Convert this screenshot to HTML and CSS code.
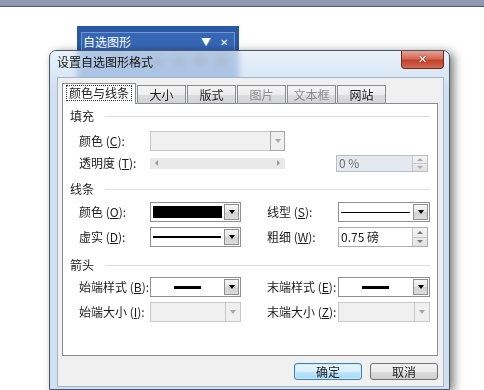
FILE: index.html
```html
<!DOCTYPE html>
<html lang="zh-CN">
<head>
    <meta charset="UTF-8">
    <meta name="viewport" content="width=device-width, initial-scale=1.0">
    <title>设置自选图形格式</title>
    <link rel="stylesheet" href="styles.css">
</head>
<body>
<div class="topbar"></div>

<div class="desktop">
    <!-- floating toolbar, partly behind the dialog -->
    <div class="toolbar">
        <div class="toolbar-inner">
            <div class="toolbar-title">
                <span class="toolbar-name">自选图形</span>
                <span class="toolbar-ctrl">▼</span>
                <span class="toolbar-ctrl">✕</span>
            </div>
            <div class="toolbar-icons">
                <i></i><i></i><i></i><i></i><i></i><i></i>
            </div>
        </div>
    </div>

    <div class="dialog">
        <div class="titlebar">
            <span class="title">设置自选图形格式</span>
            <button class="close-btn">✕</button>
        </div>

        <div class="client">
            <div class="tabs">
                <div class="tab active"><span class="focus">颜色与线条</span></div>
                <div class="tab">大小</div>
                <div class="tab">版式</div>
                <div class="tab is-disabled">图片</div>
                <div class="tab is-disabled">文本框</div>
                <div class="tab">网站</div>
            </div>

            <div class="panel">
                <div class="group-title first">填充</div>
                <div class="row row-fill">
                    <label class="lbl">颜色 (<u>C</u>):</label>
                    <div class="combo combo-wide is-disabled">
                        <span class="combo-value"></span>
                        <span class="combo-btn"><i class="arrow"></i></span>
                    </div>
                </div>
                <div class="row row-alpha">
                    <label class="lbl">透明度 (<u>T</u>):</label>
                    <div class="slider"><i class="tri-left"></i><i class="tri-right"></i></div>
                    <div class="spin spin-alpha is-disabled">
                        <span class="spin-value">0 %</span>
                        <span class="spin-btns"><i class="up"></i><i class="down"></i></span>
                    </div>
                </div>

                <div class="group-title">线条</div>
                <div class="row row-first">
                    <label class="lbl">颜色 (<u>O</u>):</label>
                    <div class="combo">
                        <span class="combo-value"><span class="swatch"></span></span>
                        <span class="combo-btn"><i class="arrow"></i></span>
                    </div>
                    <label class="lbl lbl-2">线型 (<u>S</u>):</label>
                    <div class="combo combo-right">
                        <span class="combo-value"><span class="line thin"></span></span>
                        <span class="combo-btn"><i class="arrow"></i></span>
                    </div>
                </div>
                <div class="row">
                    <label class="lbl">虚实 (<u>D</u>):</label>
                    <div class="combo">
                        <span class="combo-value"><span class="line thick"></span></span>
                        <span class="combo-btn"><i class="arrow"></i></span>
                    </div>
                    <label class="lbl lbl-2">粗细 (<u>W</u>):</label>
                    <div class="spin spin-weight">
                        <span class="spin-value">0.75 磅</span>
                        <span class="spin-btns"><i class="up"></i><i class="down"></i></span>
                    </div>
                </div>

                <div class="group-title group-arrows">箭头</div>
                <div class="row">
                    <label class="lbl">始端样式 (<u>B</u>):</label>
                    <div class="combo">
                        <span class="combo-value centered"><span class="line stub"></span></span>
                        <span class="combo-btn"><i class="arrow"></i></span>
                    </div>
                    <label class="lbl lbl-2">末端样式 (<u>E</u>):</label>
                    <div class="combo combo-right">
                        <span class="combo-value centered"><span class="line stub"></span></span>
                        <span class="combo-btn"><i class="arrow"></i></span>
                    </div>
                </div>
                <div class="row">
                    <label class="lbl">始端大小 (<u>I</u>):</label>
                    <div class="combo is-disabled">
                        <span class="combo-value"></span>
                        <span class="combo-btn"><i class="arrow"></i></span>
                    </div>
                    <label class="lbl lbl-2">末端大小 (<u>Z</u>):</label>
                    <div class="combo combo-right is-disabled">
                        <span class="combo-value"></span>
                        <span class="combo-btn"><i class="arrow"></i></span>
                    </div>
                </div>
            </div>

            <div class="buttons">
                <button class="btn btn-default">确定</button>
                <button class="btn">取消</button>
            </div>
        </div>
    </div>
</div>
</body>
</html>
```

FILE: styles.css
```css
* {
    box-sizing: border-box;
}

body {
    margin: 0;
    background: #fff;
    font-family: "Noto Sans CJK SC", sans-serif;
    font-size: 12px;
    line-height: 14px;
    color: #1a1a1a;
    overflow: hidden;
}

.topbar {
    height: 7px;
    background: #9199b1;
    border-bottom: 1px solid #4f586c;
}

.desktop {
    position: relative;
    height: 383px;
    overflow: hidden;
}

/* toolbar window */
.toolbar {
    position: absolute;
    left: 77px;
    top: 19px;
    width: 162px;
    height: 58px;
    padding: 6px 4px 4px;
    background: #2b58a2;
}

.toolbar-inner {
    height: 100%;
    border: 1px solid #6f96d2;
    background: #3567b5;
}

.toolbar-title {
    display: flex;
    align-items: center;
    height: 17px;
    padding: 0 6px 0 1px;
    color: #fff;
}

.toolbar-name {
    flex: 1;
}

.toolbar-ctrl {
    margin-left: 9px;
    font-size: 10px;
}

.toolbar-icons {
    display: flex;
    gap: 9px;
    padding: 7px 0 0 28px;
}

.toolbar-icons i {
    width: 12px;
    height: 9px;
    background: #2a3f63;
}

/* dialog window */
.dialog {
    position: absolute;
    left: 49px;
    top: 43px;
    width: 401px;
    height: 340px;
    display: flex;
    flex-direction: column;
    padding: 0 5px 2px 7px;
    border: 1px solid #47566a;
    border-radius: 7px 7px 0 0;
    background: linear-gradient(rgba(226, 238, 250, 0.72), rgba(196, 216, 239, 0.8) 40px);
    backdrop-filter: blur(3px);
    box-shadow: 4px 2px 10px rgba(0, 0, 0, 0.5);
}

.titlebar {
    display: flex;
    align-items: flex-start;
    height: 26px;
    flex-shrink: 0;
}

.title {
    flex: 1;
    padding-top: 4px;
    color: #111;
}

.close-btn {
    width: 43px;
    height: 18px;
    padding: 0;
    border: 1px solid #6b2a1f;
    border-top: none;
    border-radius: 0 0 4px 4px;
    background: linear-gradient(#e9a391, #d36a55 45%, #c1412c 55%, #d46a50);
    color: #fff;
    font-family: "DejaVu Sans", sans-serif;
    font-size: 11px;
    font-weight: bold;
    line-height: 16px;
    text-shadow: 0 0 2px #6b2a1f;
}

.client {
    flex: 1;
    display: flex;
    flex-direction: column;
    padding: 5px 5px 0 4px;
    background: #f0f0f0;
    border: 1px solid #a4b4c9;
}

/* tabs */
.tabs {
    display: flex;
    align-items: flex-end;
    height: 20px;
    position: relative;
    z-index: 1;
}

.tab {
    width: 49px;
    height: 18px;
    margin-left: 1px;
    border: 1px solid #898c95;
    border-bottom: none;
    background: linear-gradient(#f5f5f5, #ececec 50%, #dedede 51%, #d2d2d2);
    text-align: center;
    line-height: 17px;
}

.tab.active {
    width: 74px;
    height: 21px;
    margin-left: 0;
    margin-bottom: -1px;
    padding-top: 2px;
    background: #fff;
    line-height: 14px;
}

.tab.is-disabled {
    color: #8c8c8c;
}

.focus {
    display: inline-block;
    padding: 0 2px;
    outline: 1px dotted #333;
}

.panel {
    height: 253px;
    background: #fff;
    border: 1px solid #898c95;
}

/* group headings with a rule */
.group-title {
    display: flex;
    align-items: center;
    height: 14px;
    margin: 10px 7px 0;
}

.group-title.first {
    margin-top: 5px;
}

.group-title.group-arrows {
    margin-top: 11px;
}

.group-title::after {
    content: "";
    flex: 1;
    height: 1px;
    margin-left: 11px;
    background: #dcdcdc;
}

.row {
    display: flex;
    align-items: center;
    height: 20px;
    margin-top: 5px;
    padding-left: 16px;
}

.row-fill {
    margin-top: 8px;
}

.row-alpha {
    height: 18px;
    margin-top: 3px;
}

.row-first {
    margin-top: 6px;
}

.lbl {
    width: 71px;
    white-space: nowrap;
}

.lbl-2 {
    margin-left: 26px;
}

u {
    text-decoration: underline;
}

/* combo boxes */
.combo {
    display: flex;
    width: 91px;
    height: 20px;
    border: 1px solid #8e8f8f;
    background: #fff;
}

.combo-wide {
    width: 135px;
}

.combo-right {
    width: 92px;
}

.combo-value {
    flex: 1;
    display: flex;
    align-items: center;
}

.combo-value.centered {
    justify-content: center;
}

.combo-btn {
    width: 15px;
    margin: 1px;
    display: flex;
    align-items: center;
    justify-content: center;
    border: 1px solid #8f8f8f;
    background: linear-gradient(#f6f6f6, #e6e6e6 50%, #d2d2d2 51%, #dcdcdc);
}

.arrow {
    width: 0;
    height: 0;
    border-left: 3.5px solid transparent;
    border-right: 3.5px solid transparent;
    border-top: 4px solid #000;
}

.combo.is-disabled {
    background: #f0f0f0;
    border-color: #c8c8c8;
}

.combo.is-disabled .combo-btn {
    margin: 0;
    border: none;
    border-left: 1px solid #c8c8c8;
    background: transparent;
}

.combo-wide.is-disabled .combo-btn {
    border: 1px solid #a7a7a7;
    margin: -1px;
}

.combo.is-disabled .arrow {
    border-top-color: #a8a8a8;
}

.swatch {
    flex: 1;
    align-self: stretch;
    margin: 3px 1px 3px 2px;
    background: #000;
}

.line {
    flex: 1;
    height: 1px;
    margin: 0 2px;
    background: #000;
}

.line.thick {
    height: 2px;
}

.line.stub {
    flex: none;
    width: 27px;
    height: 3px;
}

/* slider */
.slider {
    display: flex;
    align-items: center;
    justify-content: space-between;
    width: 135px;
    height: 11px;
    padding: 0 5px;
    background: #e9e9e9;
}

.tri-left,
.tri-right {
    width: 0;
    height: 0;
    border-top: 3px solid transparent;
    border-bottom: 3px solid transparent;
}

.tri-left {
    border-right: 3px solid #9a9a9a;
}

.tri-right {
    border-left: 3px solid #9a9a9a;
}

/* spin boxes */
.spin {
    display: flex;
    height: 20px;
    width: 90px;
    border: 1px solid #abadb3;
    background: #fff;
}

.spin-alpha {
    width: 92px;
    height: 17px;
    margin-left: 51px;
    background: #e4e8ef;
    border-color: #b9bfc9;
    color: #6c6c6c;
}

.spin-value {
    flex: 1;
    padding-left: 2px;
    display: flex;
    align-items: center;
}

.spin-btns {
    width: 15px;
    display: flex;
    flex-direction: column;
    border-left: 1px solid #c4c4c4;
    background: linear-gradient(#f4f4f4, #e2e2e2);
}

.spin-btns i {
    flex: 1;
    display: flex;
    align-items: center;
    justify-content: center;
}

.spin-btns i::before {
    content: "";
    border-left: 3px solid transparent;
    border-right: 3px solid transparent;
}

.spin-btns .up {
    border-bottom: 1px solid #c8c8c8;
}

.spin-btns .up::before {
    border-bottom: 3px solid #777;
}

.spin-btns .down::before {
    border-top: 3px solid #777;
}

.spin-alpha .spin-btns i::before {
    border-bottom-color: #a8a8a8;
    border-top-color: #a8a8a8;
}

/* dialog buttons */
.buttons {
    display: flex;
    justify-content: flex-end;
    gap: 8px;
    margin-top: 7px;
}

.btn {
    width: 68px;
    height: 17px;
    padding: 0;
    border: 1px solid #707070;
    border-radius: 3px;
    background: linear-gradient(#f3f3f3, #ebebeb 50%, #dddddd 51%, #cfcfcf);
    font-family: "Noto Sans CJK SC", sans-serif;
    font-size: 12px;
    line-height: 14px;
    color: #1a1a1a;
}

.btn-default {
    border-color: #3c7fb1;
    background: linear-gradient(#eaf6fd, #d9f0fc 50%, #bee6fd 51%, #a7d9f5);
    box-shadow: inset 0 0 0 1px #cdeaf9;
}
```
